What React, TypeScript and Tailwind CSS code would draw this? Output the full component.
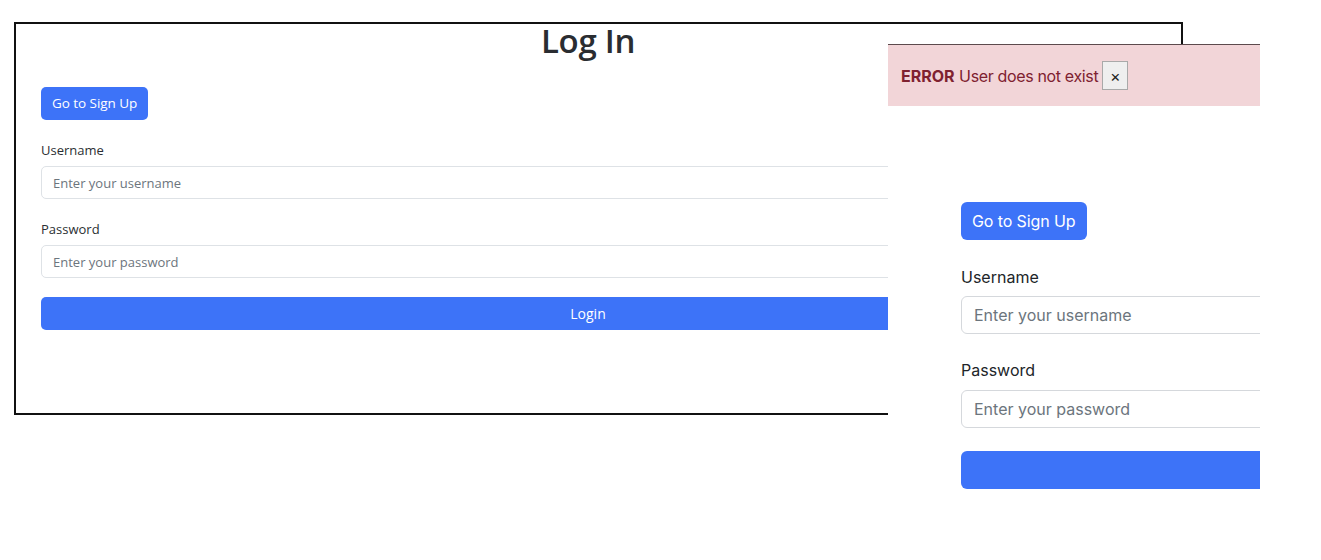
export default function App() {
    return (
        <div className="relative w-[1321px] h-[560px] bg-white overflow-hidden">
            {/* Login screen (older screenshot, zoomed out) */}
            <div
                className="ml-[14px] mt-[22px] w-[1169px] h-[393px] border-2 border-[#111] pl-[25px] pr-[46px]"
                style={{ fontFamily: '"Open Sans", "Noto Sans", sans-serif' }}
            >
                <div className="flex flex-col">
                    <h1 className="-mt-[4px] h-[42px] text-center text-[33px] leading-[42px] font-semibold text-[#2a2d31] tracking-[-0.3px]">Log In</h1>

                    <div className="mt-[25px]">
                        <button className="h-[33px] px-[11px] rounded-[5px] bg-[#3d73f8] text-white text-[13.5px] leading-[21px] tracking-[-0.05px]">
                            Go to Sign Up
                        </button>
                    </div>

                    <label className="mt-[20px] h-[21px] text-[13px] leading-[21px] text-[#2b2f33]">Username</label>
                    <input
                        className="mt-[5px] h-[33px] w-full rounded-[5px] border border-[#dee2e6] px-[11px] text-[13px] text-[#212529] placeholder:text-[#6c757d] outline-none"
                        placeholder="Enter your username"
                    />

                    <label className="mt-[20px] h-[21px] text-[13px] leading-[21px] text-[#2b2f33]">Password</label>
                    <input
                        type="password"
                        className="mt-[5px] h-[33px] w-full rounded-[5px] border border-[#dee2e6] px-[11px] text-[13px] text-[#212529] placeholder:text-[#6c757d] outline-none"
                        placeholder="Enter your password"
                    />

                    <button className="mt-[19px] h-[33px] w-full rounded-[5px] bg-[#3d73f8] text-white text-[14px]">
                        Login
                    </button>
                </div>
            </div>

            {/* Error state screenshot laid over the right side */}
            <div
                className="absolute left-[888px] top-[44px] w-[372px] h-[456px] bg-white overflow-hidden"
                style={{ fontFamily: 'Inter, "Liberation Sans", sans-serif' }}
            >
                <div className="h-[62px] border-t border-[#5c4a4d] bg-[#f2d5d8] pl-[13px] flex items-center">
                    <span className="text-[16px] text-[#7f2130]">
                        <b className="font-bold">ERROR</b> <span className="tracking-[-0.35px]">User does not exist</span>
                    </span>
                    <button className="ml-[4px] w-[26px] h-[29px] border border-[#a9a9a9] bg-[#efefef] text-[16px] leading-none text-[#222] flex items-center justify-center">
                        ×
                    </button>
                </div>

                <div className="pl-[73px] pt-[96px] flex flex-col">
                    <div>
                        <button className="h-[38px] px-[11px] rounded-[6px] bg-[#3d73f8] text-white text-[16px] leading-[24px] tracking-[-0.1px]">
                            Go to Sign Up
                        </button>
                    </div>

                    <label className="mt-[25px] h-[24px] text-[16px] leading-[24px] text-[#212529]">Username</label>
                    <input
                        className="mt-[7px] h-[38px] w-[420px] rounded-[6px] border border-[#d5d8dc] px-[12px] text-[16px] text-[#212529] placeholder:text-[#6c757d] outline-none"
                        placeholder="Enter your username"
                    />

                    <label className="mt-[24px] h-[24px] text-[16px] leading-[24px] text-[#212529]">Password</label>
                    <input
                        type="password"
                        className="mt-[8px] h-[38px] w-[420px] rounded-[6px] border border-[#d5d8dc] px-[12px] text-[16px] text-[#212529] placeholder:text-[#6c757d] outline-none"
                        placeholder="Enter your password"
                    />

                    <button className="mt-[23px] h-[38px] w-[420px] rounded-[6px] bg-[#3d73f8]" aria-label="Login" />
                </div>
            </div>
        </div>
    );
}
